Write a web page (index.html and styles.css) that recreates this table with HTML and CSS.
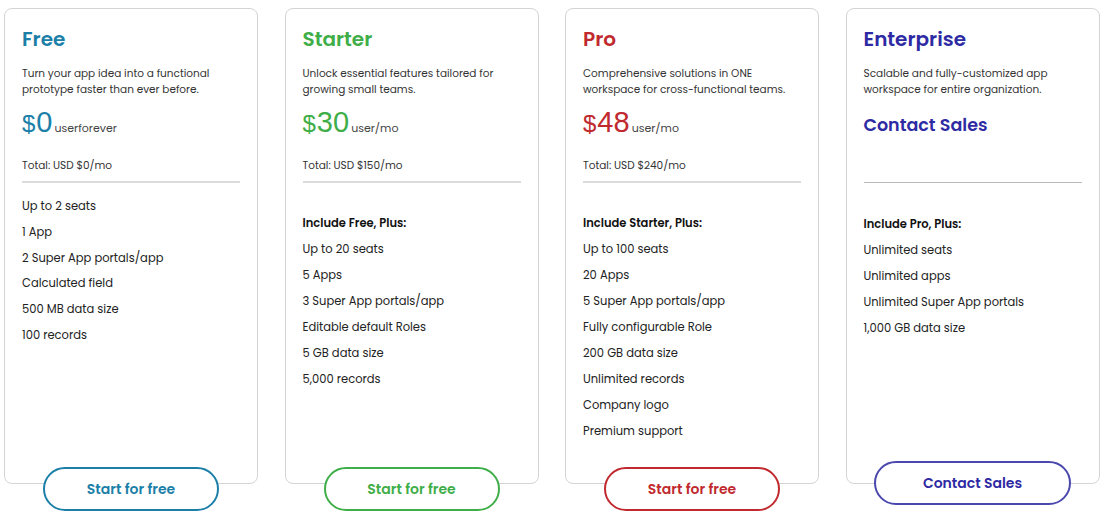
FILE: index.html
```html
<!DOCTYPE html>
<html>
<head>
<meta charset="utf-8">
<link rel="stylesheet" href="styles.css">
</head>
<body>
<div class="plans">
  <div class="plan plan-free">
    <div class="card">
      <h2 class="name">Free</h2>
      <p class="desc">Turn your app idea into a functional prototype faster than ever before.</p>
      <div class="price"><span class="cur">$</span><span class="amt">0</span><span class="unit">userforever</span></div>
      <div class="total">Total: USD $0/mo</div>
      <div class="divider"></div>
      <ul class="features">
        <li>Up to 2 seats</li>
        <li>1 App</li>
        <li>2 Super App portals/app</li>
        <li>Calculated field</li>
        <li>500 MB data size</li>
        <li>100 records</li>
      </ul>
    </div>
    <button class="cta">Start for free</button>
  </div>
  <div class="plan plan-starter">
    <div class="card">
      <h2 class="name">Starter</h2>
      <p class="desc">Unlock essential features tailored for growing small teams.</p>
      <div class="price"><span class="cur">$</span><span class="amt">30</span><span class="unit">user/mo</span></div>
      <div class="total">Total: USD $150/mo</div>
      <div class="divider"></div>
      <ul class="features has-head">
        <li class="head">Include Free, Plus:</li>
        <li>Up to 20 seats</li>
        <li>5 Apps</li>
        <li>3 Super App portals/app</li>
        <li>Editable default Roles</li>
        <li>5 GB data size</li>
        <li>5,000 records</li>
      </ul>
    </div>
    <button class="cta">Start for free</button>
  </div>
  <div class="plan plan-pro">
    <div class="card">
      <h2 class="name">Pro</h2>
      <p class="desc">Comprehensive solutions in ONE workspace for cross-functional teams.</p>
      <div class="price"><span class="cur">$</span><span class="amt">48</span><span class="unit">user/mo</span></div>
      <div class="total">Total: USD $240/mo</div>
      <div class="divider"></div>
      <ul class="features has-head">
        <li class="head">Include Starter, Plus:</li>
        <li>Up to 100 seats</li>
        <li>20 Apps</li>
        <li>5 Super App portals/app</li>
        <li>Fully configurable Role</li>
        <li>200 GB data size</li>
        <li>Unlimited records</li>
        <li>Company logo</li>
        <li>Premium support</li>
      </ul>
    </div>
    <button class="cta">Start for free</button>
  </div>
  <div class="plan plan-ent">
    <div class="card">
      <h2 class="name">Enterprise</h2>
      <p class="desc">Scalable and fully-customized app workspace for entire organization.</p>
      <div class="contact">Contact Sales</div>
      <div class="divider divider-thin"></div>
      <ul class="features has-head">
        <li class="head">Include Pro, Plus:</li>
        <li>Unlimited seats</li>
        <li>Unlimited apps</li>
        <li>Unlimited Super App portals</li>
        <li>1,000 GB data size</li>
      </ul>
    </div>
    <button class="cta cta-wide">Contact Sales</button>
  </div>
</div>
</body>
</html>
```

FILE: styles.css
```css
* { box-sizing: border-box; }
html, body { margin: 0; padding: 0; background: #fff; }
body {
  font-family: "Poppins", "Inter", "Open Sans", sans-serif;
  color: #333;
}
.plans {
  display: flex;
  gap: 26.5px;
  padding: 8px 0 0 4px;
}
.plan {
  width: 254px;
  display: flex;
  flex-direction: column;
  align-items: center;
}
.card {
  width: 254px;
  height: 476px;
  border: 1px solid #d4d4d4;
  border-radius: 8px;
  padding: 17px 17px 0 17px;
  align-self: stretch;
}
.name {
  margin: 0;
  font-size: 20px;
  line-height: 26px;
  font-weight: 600;
}
.desc {
  margin: 14px 0 0;
  font-size: 10.5px;
  line-height: 16px;
  color: #333;
}
.price {
  display: flex;
  align-items: baseline;
  margin-top: 6px;
  height: 36px;
}
.cur {
  font-family: "Liberation Sans", Arial, sans-serif;
  font-size: 24px;
  margin-right: 1px;
}
.amt {
  font-family: "Liberation Sans", Arial, sans-serif;
  font-size: 29px;
  line-height: 36px;
}
.unit {
  font-size: 11px;
  color: #444;
  margin-left: 2px;
}
.total {
  margin-top: 18px;
  font-size: 10.5px;
  line-height: 16px;
  color: #333;
}
.divider {
  margin-top: 7px;
  height: 2px;
  background: #dcdcdc;
}
.divider-thin {
  margin-top: 45px;
  height: 1px;
  background: #b9b9b9;
}
.contact {
  margin-top: 15px;
  font-size: 17.5px;
  line-height: 24px;
  font-weight: 600;
}
.features {
  list-style: none;
  margin: 11px 0 0;
  padding: 0;
}
.features.has-head { margin-top: 27px; }
.plan-ent .features.has-head { margin-top: 28px; }
.features li {
  font-size: 11.5px;
  line-height: 26px;
  color: #222;
}
.plan-free .features li { line-height: 25.8px; }
.features li.head {
  font-weight: 600;
  color: #111;
}
.cta {
  margin-top: -17px;
  width: 176px;
  height: 44px;
  border-radius: 22px;
  background: #fff;
  border: 2px solid currentColor;
  font-family: inherit;
  font-size: 14px;
  font-weight: 600;
  cursor: pointer;
}
.cta-wide {
  width: 197px;
  margin-top: -23px;
}
.plan-free .name, .plan-free .cur, .plan-free .amt { color: #1b7fa8; }
.plan-starter .name, .plan-starter .cur, .plan-starter .amt { color: #3fae49; }
.plan-pro .name, .plan-pro .cur, .plan-pro .amt { color: #c02a2e; }
.plan-ent .name, .plan-ent .contact { color: #2e2aa3; }
.plan-free .cta { color: #1b7fa8; }
.plan-starter .cta { color: #3fae49; }
.plan-pro .cta { color: #c02a2e; }
.plan-ent .cta { color: #2e2aa3; border-color: #4a47ad; }
```
